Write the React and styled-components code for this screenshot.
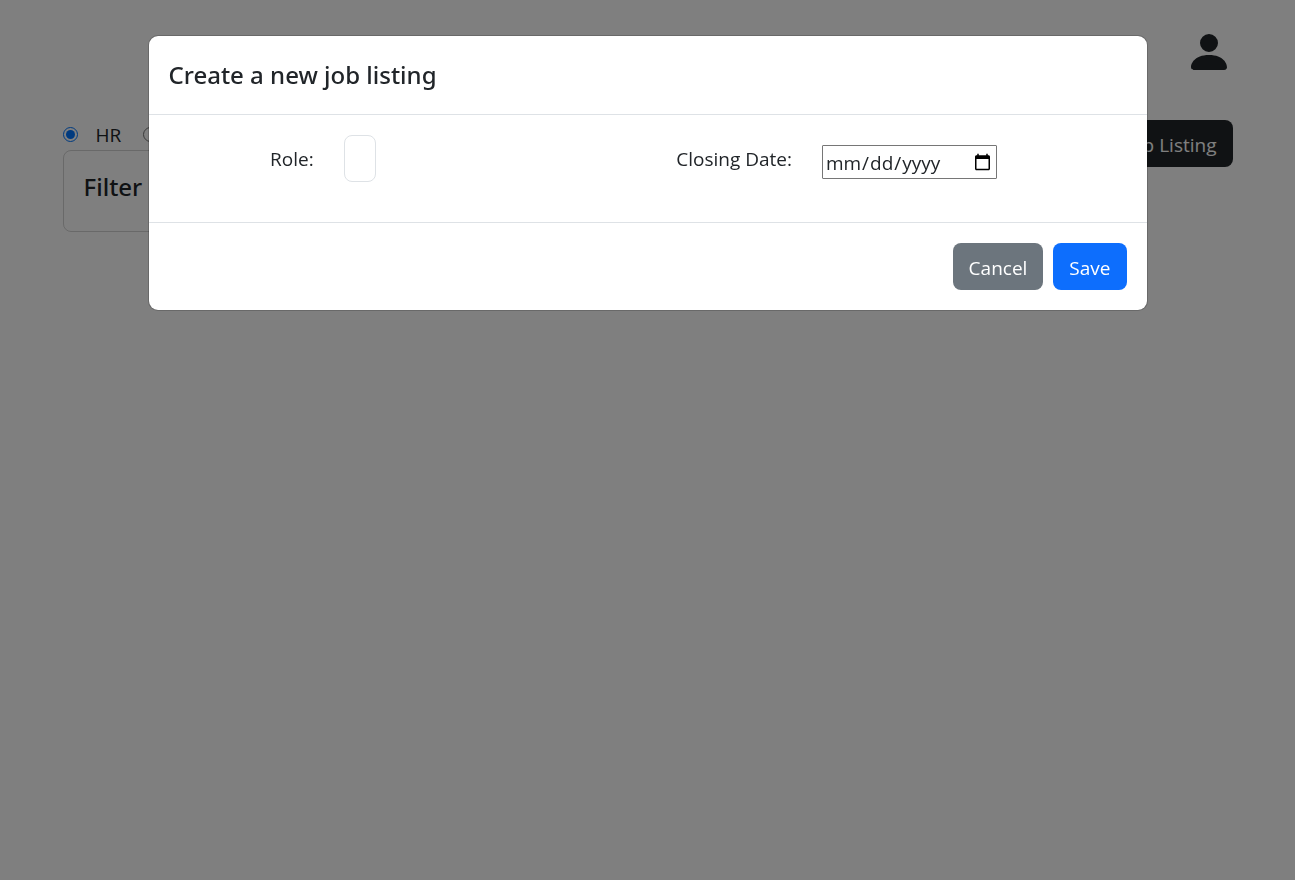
import React, { useState } from "react";
import styled, { createGlobalStyle } from "styled-components";

const GlobalStyle = createGlobalStyle`
  *, *::before, *::after { box-sizing: border-box; }
  body {
    margin: 0;
    background: #fff;
    color: #212529;
    font-family: "Segoe UI", "Open Sans", "Noto Sans", sans-serif;
    font-size: 19px;
    line-height: 30px;
  }
  button, input, select { font: inherit; }
`;

const Page = styled.div`
  max-width: 1200px;
  margin: 0 auto;
  padding: 28px 15px 0;
`;

const Header = styled.header`
  display: flex;
  justify-content: flex-end;
  margin-bottom: 44px;
`;

const ProfileButton = styled.button`
  display: block;
  padding: 0;
  border: 0;
  background: none;
  color: inherit;
  cursor: pointer;

  svg { display: block; }
`;

const Toolbar = styled.main`
  display: flex;
  align-items: flex-start;
  justify-content: space-between;
`;

const Filters = styled.section`
  flex: 0 1 380px;
`;

const RoleOptions = styled.div`
  display: flex;
  gap: 22px;
`;

const RadioOption = styled.label`
  display: flex;
  align-items: center;
  gap: 18px;

  input {
    width: 15px;
    height: 15px;
    margin: 0 0 2px;
  }
`;

const FilterCard = styled.div`
  padding: 20px;
  border: 1px solid rgba(0, 0, 0, 0.175);
  border-radius: 8px;
`;

const Title = styled.h2`
  margin: 0;
  font-family: "Segoe UI", "Noto Sans", sans-serif;
  font-size: 24px;
  font-weight: 500;
  line-height: ${({ $tall }) => ($tall ? "38px" : "32px")};
`;

const CardTitle = styled(Title)`
  margin-bottom: 8px;
`;

const colors = {
  dark: "#212529",
  secondary: "#6c757d",
  primary: "#0d6efd",
};

const Button = styled.button`
  height: 47px;
  padding: 2px 16px 0;
  border: 0;
  border-radius: 8px;
  background: ${({ $tone }) => colors[$tone]};
  color: #fff;
  white-space: nowrap;
  cursor: pointer;
`;

const Backdrop = styled.div`
  position: fixed;
  inset: 0;
  padding: 35px 20px;
  background: rgba(0, 0, 0, 0.5);
  overflow: auto;
`;

const Dialog = styled.div`
  max-width: 1000px;
  margin: 0 auto;
  border: 1px solid rgba(0, 0, 0, 0.175);
  border-radius: 10px;
  background: #fff;
  background-clip: padding-box;
`;

const DialogHeader = styled.div`
  padding: 20px;
  border-bottom: 1px solid #dee2e6;
`;

const DialogBody = styled.div`
  display: flex;
  flex-wrap: wrap;
  justify-content: space-around;
  padding: 20px 20px 40px;
`;

const Field = styled.div`
  display: flex;
  align-items: center;
  gap: 30px;
  min-width: 203px;
  padding-right: 28px;
`;

const RoleSelect = styled.select`
  appearance: none;
  width: 32px;
  height: 47px;
  padding: 0;
  border: 1px solid #dee2e6;
  border-radius: 8px;
  background: #fff;
`;

const DateInput = styled.input`
  width: 175px;
  height: 34px;
  margin-top: 6px;
  padding: 3px 2px 1px;
  border: 1px solid #767676;
  border-radius: 1px;
  background: #fff;
  color: #212529;
`;

const DialogFooter = styled.div`
  display: flex;
  justify-content: flex-end;
  gap: 10px;
  padding: 20px;
  border-top: 1px solid #dee2e6;
`;

function PersonIcon() {
  return (
    <svg width="48" height="48" viewBox="0 0 16 16" fill="currentColor" aria-hidden="true">
      <path d="M3 14s-1 0-1-1 1-4 6-4 6 3 6 4-1 1-1 1zm5-6a3 3 0 1 0 0-6 3 3 0 0 0 0 6" />
    </svg>
  );
}

export default function App() {
  const [open, setOpen] = useState(true);
  const close = () => setOpen(false);

  return (
    <>
      <GlobalStyle />
      <Page>
        <Header>
          <ProfileButton type="button" aria-label="Profile">
            <PersonIcon />
          </ProfileButton>
        </Header>
        <Toolbar>
          <Filters>
            <RoleOptions>
              <RadioOption>
                <input type="radio" name="view" defaultChecked />
                HR
              </RadioOption>
              <RadioOption>
                <input type="radio" name="view" aria-label="Staff" />
              </RadioOption>
            </RoleOptions>
            <FilterCard>
              <CardTitle>Filter</CardTitle>
            </FilterCard>
          </Filters>
          <Button type="button" $tone="dark" onClick={() => setOpen(true)}>
            Create Job Listing
          </Button>
        </Toolbar>
      </Page>
      {open && (
        <Backdrop>
          <Dialog role="dialog" aria-modal="true" aria-labelledby="dialog-title">
            <DialogHeader>
              <Title id="dialog-title" $tall>Create a new job listing</Title>
            </DialogHeader>
            <DialogBody>
              <Field>
                <label htmlFor="role">Role:</label>
                <RoleSelect id="role" />
              </Field>
              <Field>
                <label htmlFor="closing-date">Closing Date:</label>
                <DateInput id="closing-date" type="date" />
              </Field>
            </DialogBody>
            <DialogFooter>
              <Button type="button" $tone="secondary" onClick={close}>Cancel</Button>
              <Button type="button" $tone="primary" onClick={close}>Save</Button>
            </DialogFooter>
          </Dialog>
        </Backdrop>
      )}
    </>
  );
}
